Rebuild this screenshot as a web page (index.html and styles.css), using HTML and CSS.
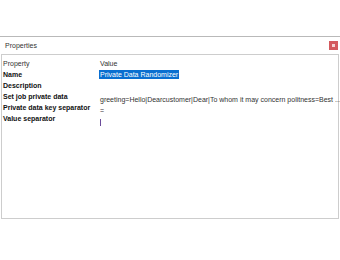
FILE: index.html
```html
<!DOCTYPE html>
<html lang="en">
<head>
  <meta charset="UTF-8">
  <meta name="viewport" content="width=device-width, initial-scale=1.0">
  <title>Properties</title>
  <link rel="stylesheet" href="styles.css">
</head>
<body>
  <div class="window">
    <div class="titlebar">
      <span class="title">Properties</span>
      <button class="close" title="Close"><span></span></button>
    </div>

    <div class="grid">
      <div class="row head">
        <div class="label">Property</div>
        <div class="value">Value</div>
      </div>
      <div class="row">
        <div class="label">Name</div>
        <div class="value"><span class="selected">Private Data Randomizer</span></div>
      </div>
      <div class="row">
        <div class="label">Description</div>
        <div class="value"></div>
      </div>
      <div class="row">
        <div class="label">Set job private data</div>
        <div class="value low">greeting=Hello|Dearcustomer|Dear|To whom it may concern politness=Best ...</div>
      </div>
      <div class="row">
        <div class="label">Private data key separator</div>
        <div class="value low">=</div>
      </div>
      <div class="row">
        <div class="label">Value separator</div>
        <div class="value low"><span class="caret"></span></div>
      </div>
    </div>
  </div>
</body>
</html>
```

FILE: styles.css
```css
body {
  margin: 0;
  background-color: #fff;
  font-family: "Liberation Sans", Arial, sans-serif;
  font-size: 7px;
  color: #222;
}
.window {
  margin-top: 36px;
  border-top: 1px solid #b9b9b9;
}
.titlebar {
  display: flex;
  align-items: center;
  justify-content: space-between;
  height: 17px;
  padding: 0 2px 0 5px;
}
.title {
  color: #333;
}
.close {
  width: 9px;
  height: 9px;
  padding: 0;
  border: none;
  background-color: #d45a5e;
  display: flex;
  align-items: center;
  justify-content: center;
}
.close span {
  width: 3px;
  height: 3px;
  background-color: #f4d3d4;
}
.grid {
  margin: 0 1px;
  height: 165px;
  padding: 3px 0 0 1px;
  border: 1px solid #cdcdcd;
  box-sizing: border-box;
}
.row {
  display: grid;
  grid-template-columns: 97px 1fr;
  height: 11px;
  line-height: 11px;
  white-space: nowrap;
}
.label {
  font-weight: bold;
  color: #111;
}
.head .label,
.head .value {
  font-weight: normal;
  color: #333;
}
.value {
  color: #333;
  overflow: visible;
}
.value.low {
  padding-top: 3px;
}
.selected {
  background-color: #0a6fd0;
  color: #fff;
  margin-left: -1px;
  padding: 1px 1px;
}
.caret {
  display: inline-block;
  width: 1px;
  height: 7px;
  background-color: #6b4c9a;
  vertical-align: middle;
}
```
